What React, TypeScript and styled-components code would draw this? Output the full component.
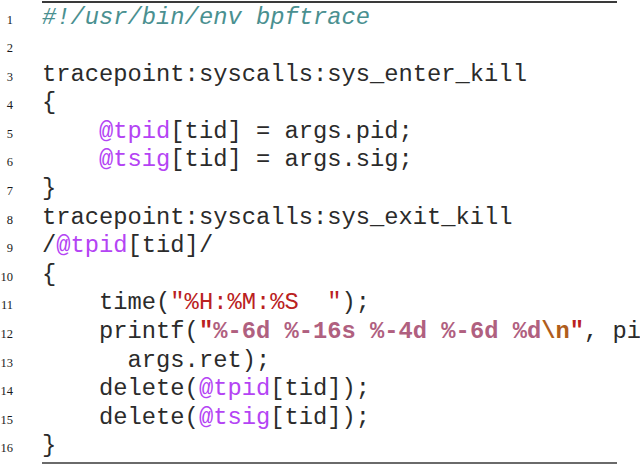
import React from "react";
import styled, { createGlobalStyle } from "styled-components";

const Global = createGlobalStyle`
  html, body { margin: 0; padding: 0; background: #ffffff; }
  body { width: 640px; height: 466px; overflow: hidden; }
`;

const Listing = styled.figure`
  margin: 0;
  padding-top: 1px;
  display: flex;
  flex-direction: column;
`;

const Rule = styled.div<{ $thick?: boolean }>`
  margin-left: 42px;
  width: 575px;
  height: ${(p) => (p.$thick ? "2px" : "1.5px")};
  background: ${(p) => (p.$thick ? "#6a6a6a" : "#3a3a3a")};
  margin-top: ${(p) => (p.$thick ? "1px" : "0")};
  margin-bottom: ${(p) => (p.$thick ? "0" : "1px")};
`;

const Lines = styled.div`
  display: flex;
  flex-direction: column;
`;

const Row = styled.div`
  display: grid;
  grid-template-columns: 13px 1fr;
  column-gap: 29px;
  align-items: baseline;
  height: 28.6px;
  overflow: hidden;
`;

const Num = styled.span`
  font-family: "Liberation Serif", "Times New Roman", serif;
  font-size: 12.5px;
  color: #1a1a1a;
  text-align: right;
`;

const Code = styled.code`
  font-family: "Liberation Mono", "Courier New", monospace;
  font-size: 23.78px;
  line-height: 28.6px;
  color: #2b2b2b;
  white-space: pre;
`;

const Comment = styled.span`
  color: #4a9090;
  font-style: italic;
`;

const Var = styled.span`
  color: #b444f4;
`;

const Str = styled.span<{ $bold?: boolean }>`
  color: #ba2121;
  font-weight: ${(p) => (p.$bold ? 700 : 400)};
`;

const Interp = styled.span`
  color: #b0607f;
  font-weight: 700;
`;

const Esc = styled.span`
  color: #b05d1c;
  font-weight: 700;
`;

const lines: React.ReactNode[] = [
  <Comment>#!/usr/bin/env bpftrace</Comment>,
  "",
  "tracepoint:syscalls:sys_enter_kill",
  "{",
  <>
    {"    "}
    <Var>@tpid</Var>[tid] = args.pid;
  </>,
  <>
    {"    "}
    <Var>@tsig</Var>[tid] = args.sig;
  </>,
  "}",
  "tracepoint:syscalls:sys_exit_kill",
  <>
    /<Var>@tpid</Var>[tid]/
  </>,
  "{",
  <>
    {"    time("}
    <Str>"%H:%M:%S  "</Str>
    {");"}
  </>,
  <>
    {"    printf("}
    <Str $bold>"</Str>
    <Interp>%-6d</Interp>
    <Str> </Str>
    <Interp>%-16s</Interp>
    <Str> </Str>
    <Interp>%-4d</Interp>
    <Str> </Str>
    <Interp>%-6d</Interp>
    <Str> </Str>
    <Interp>%d</Interp>
    <Esc>\n</Esc>
    <Str $bold>"</Str>
    {", pi"}
  </>,
  "      args.ret);",
  <>
    {"    delete("}
    <Var>@tpid</Var>
    {"[tid]);"}
  </>,
  <>
    {"    delete("}
    <Var>@tsig</Var>
    {"[tid]);"}
  </>,
  "}",
];

export default function App() {
  return (
    <>
      <Global />
      <Listing>
        <Rule />
        <Lines>
          {lines.map((content, i) => (
            <Row key={i}>
              <Num>{i + 1}</Num>
              <Code>{content === "" ? " " : content}</Code>
            </Row>
          ))}
        </Lines>
        <Rule $thick />
      </Listing>
    </>
  );
}
